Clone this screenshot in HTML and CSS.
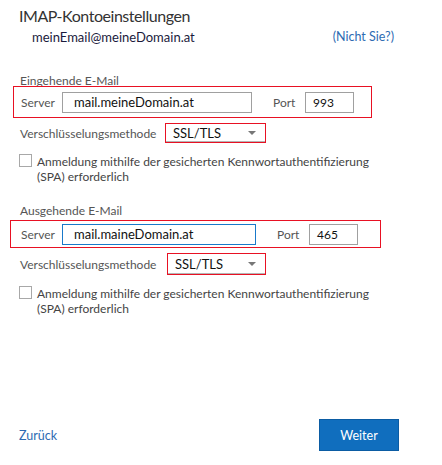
FILE: index.html
```html
<!DOCTYPE html>
<html lang="de">
<head>
<meta charset="utf-8">
<title>IMAP-Kontoeinstellungen</title>
<link rel="stylesheet" href="styles.css">
</head>
<body>
<div class="dialog">
  <h1 class="title">IMAP-Kontoeinstellungen</h1>
  <div class="account">
    <span class="email">meinEmail@meineDomain.at</span>
    <a class="link" href="#">(Nicht Sie?)</a>
  </div>

  <section class="section section-in">
    <div class="section-label">Eingehende E-Mail</div>
    <div class="server-row mark mark-in">
      <span class="label server-label">Server</span>
      <span class="input input-server-in">mail.meineDomain.at</span>
      <span class="label port-label">Port</span>
      <span class="input input-port">993</span>
    </div>
    <div class="enc-row">
      <span class="label enc-label">Verschlüsselungsmethode</span>
      <span class="select mark">SSL/TLS<span class="caret"></span></span>
    </div>
    <label class="check-row">
      <span class="checkbox"></span>
      <span class="check-text">Anmeldung mithilfe der gesicherten Kennwortauthentifizierung (SPA) erforderlich</span>
    </label>
  </section>

  <section class="section section-out">
    <div class="section-label">Ausgehende E-Mail</div>
    <div class="server-row mark mark-out">
      <span class="label server-label">Server</span>
      <span class="input input-server-out focused">mail.maineDomain.at</span>
      <span class="label port-label">Port</span>
      <span class="input input-port">465</span>
    </div>
    <div class="enc-row">
      <span class="label enc-label">Verschlüsselungsmethode</span>
      <span class="select mark select-out">SSL/TLS<span class="caret"></span></span>
    </div>
    <label class="check-row">
      <span class="checkbox"></span>
      <span class="check-text">Anmeldung mithilfe der gesicherten Kennwortauthentifizierung (SPA) erforderlich</span>
    </label>
  </section>

  <div class="footer">
    <a class="link back" href="#">Zurück</a>
    <button class="primary" type="button">Weiter</button>
  </div>
</div>
</body>
</html>
```

FILE: styles.css
```css
* { box-sizing: border-box; }
html, body { margin: 0; padding: 0; background: #fff; }
body {
  font-family: Lato, "Open Sans", sans-serif;
  font-size: 12px;
  color: #333;
}
.dialog {
  width: 442px;
  height: 465px;
  display: flex;
  flex-direction: column;
  padding: 5px 0 0 19px;
}
.title {
  margin: 0;
  font-size: 16px;
  font-weight: 400;
  letter-spacing: -0.45px;
  line-height: 22px;
  color: #333;
}
.account {
  display: flex;
  justify-content: space-between;
  width: 375px;
  padding-left: 13px;
  margin-top: 1px;
  line-height: 18px;
}
.email { color: #1a1a3c; font-size: 13px; }
.link { color: #2e6bb2; text-decoration: none; font-size: 12.5px; }

.section { display: flex; flex-direction: column; }
.section-in { margin-top: 28px; }
.section-out { margin-top: 20px; }
.section-label { color: #555; line-height: 14px; padding-left: 1px; }
.label { color: #555; }

.mark { border: 1px solid #e81123; }
.server-row {
  display: flex;
  align-items: center;
}
.mark-in { margin: -2px 0 0 -6px; width: 359px; height: 32px; padding-left: 6px; }
.mark-out { margin: 2px 0 0 -9px; width: 371px; height: 28px; padding-left: 9px; }

.server-label { flex: none; width: 42px; padding-left: 1px; }
.input {
  flex: none;
  height: 21px;
  border: 1px solid #a0a0a0;
  display: flex;
  align-items: center;
  color: #111;
}
.input-server-in { width: 190px; padding-left: 11px; font-size: 13px; }
.input-server-out { width: 194px; padding-left: 11px; font-size: 13px; }
.focused { border-color: #1979ca; }
.port-label { flex: none; width: 32px; margin-left: 21px; }
.input-port { width: 49px; padding-left: 7px; font-size: 12px; }

.enc-row { display: flex; align-items: center; margin-top: 5px; }
.enc-label { flex: none; width: 146px; padding-left: 1px; }
.select {
  position: relative;
  width: 101px;
  height: 20px;
  display: flex;
  align-items: center;
  padding-left: 7px;
  color: #111;
  font-size: 13px;
  box-shadow: inset 0 -1px 0 #b5b5b5;
}
.select-out { height: 22px; width: 99px; margin-left: 2px; }
.caret {
  position: absolute;
  right: 9px;
  top: 50%;
  margin-top: -2px;
  width: 0; height: 0;
  border-left: 4px solid transparent;
  border-right: 4px solid transparent;
  border-top: 4px solid #777;
}

.check-row { display: flex; align-items: flex-start; margin-top: 11px; }
.checkbox {
  flex: none;
  width: 13px; height: 13px;
  border: 1px solid #a8a8a8;
  margin-top: 0;
  background: #fff;
}
.check-text { margin-left: 5px; width: 350px; color: #444; line-height: 15px; }

.footer {
  margin-top: auto;
  display: flex;
  align-items: center;
  justify-content: space-between;
  width: 380px;
  margin-bottom: 14px;
}
.back { font-size: 12.5px; }
.primary {
  width: 80px;
  height: 32px;
  background: #106ebe;
  border: 1px solid #0b5ca3;
  color: #fff;
  font-family: inherit;
  font-size: 12.5px;
  padding: 0;
}
```
